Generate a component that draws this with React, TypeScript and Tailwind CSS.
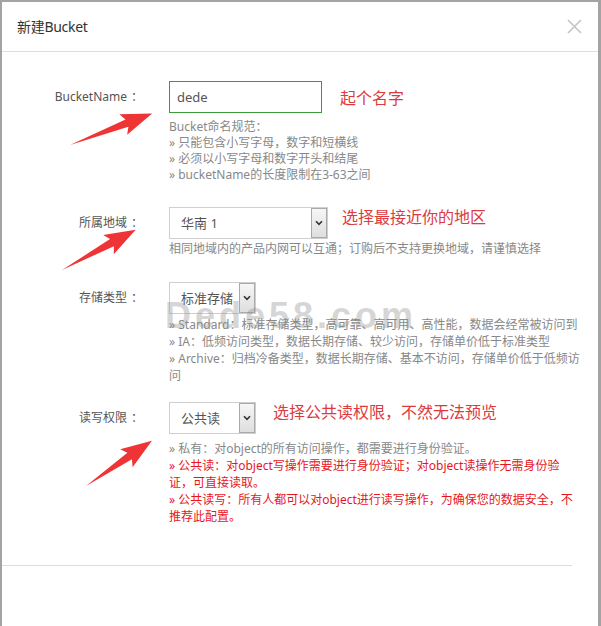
const Chevron = () => (
  <svg width="8" height="6" viewBox="0 0 8 6" className="block">
    <path d="M1 1.2 L4 4.4 L7 1.2" fill="none" stroke="#333" strokeWidth="1.6" />
  </svg>
)

const Select = ({ value, width }: { value: string; width: string }) => (
  <div className={`${width} h-[32px] flex border border-[#cfcfcf] bg-white`}>
    <div className="flex-1 pl-[11px] leading-[30px] text-[13px] text-[#555]">{value}</div>
    <div className="w-[16px] flex items-center justify-center border border-[#a9a9a9] bg-gradient-to-b from-[#f6f6f6] to-[#dedede]">
      <Chevron />
    </div>
  </div>
)

const Label = ({ text }: { text: string }) => (
  <div className="w-[137px] shrink-0 text-right leading-[32px] text-[#555] whitespace-nowrap">
    {text}
    <span className="inline-block w-[8px] ml-[4px] text-left">：</span>
  </div>
)

// arrow drawn pointing right from the tail, then rotated into place
const Arrow = ({ x, y, len, angle }: { x: number; y: number; len: number; angle: number }) => (
  <polygon
    transform={`translate(${x} ${y}) rotate(${angle})`}
    points={`0,0 ${len - 27},-4 ${len - 31},-11 ${len},0 ${len - 31},11 ${len - 27},4`}
    fill="#ee3434"
  />
)

export default function App() {
  const rules = ['Bucket命名规范：', '» 只能包含小写字母，数字和短横线', '» 必须以小写字母和数字开头和结尾', '» bucketName的长度限制在3-63之间']
  const storage = [
    '» Standard：标准存储类型，高可靠、高可用、高性能，数据会经常被访问到',
    '» IA：低频访问类型，数据长期存储、较少访问，存储单价低于标准类型',
    '» Archive：归档冷备类型，数据长期存储、基本不访问，存储单价低于低频访',
    '问'
  ]

  return (
    <div className="relative w-[601px] h-[626px] bg-white border-t-2 border-l-2 border-r-[3px] border-[#a3a3a3] font-['Noto_Sans','Noto_Sans_CJK_SC',sans-serif] overflow-hidden">
      {/* Header */}
      <div className="h-[50px] flex items-center justify-between pl-[15px] pr-[16px] border-b border-[#dedede]">
        <span className="text-[14px] text-[#333] tracking-[-0.3px]">新建Bucket</span>
        <svg width="15" height="15" viewBox="0 0 15 15">
          <path d="M1 1 L14 14 M14 1 L1 14" stroke="#c4c4c4" strokeWidth="1.6" />
        </svg>
      </div>

      {/* Body */}
      <div className="pt-[29px] text-[12px]">
        <div className="flex">
          <Label text="BucketName" />
          <div className="ml-[30px]">
            <div className="flex items-start">
              <div className="w-[153px] h-[32px] border border-[#3b9a3b] pl-[7px] leading-[30px] text-[13px] text-[#555]">dede</div>
              <span className="ml-[18px] mt-[1px] leading-[32px] text-[16px] text-[#dc3a40]">起个名字</span>
            </div>
            <div className="mt-[5px] leading-[16px] text-[#888]">
              {rules.map((r, i) => (
                <div key={i} className="whitespace-nowrap">{r}</div>
              ))}
            </div>
          </div>
        </div>

        <div className="flex mt-[24px]">
          <Label text="所属地域" />
          <div className="ml-[30px]">
            <div className="flex items-start">
              <Select value="华南 1" width="w-[159px]" />
              <span className="ml-[14px] -mt-[6px] leading-[32px] text-[16px] text-[#dc3a40]">选择最接近你的地区</span>
            </div>
            <div className="mt-[2px] leading-[16px] text-[#888] whitespace-nowrap">
              相同地域内的产品内网可以互通；订购后不支持更换地域，请谨慎选择
            </div>
          </div>
        </div>

        <div className="flex mt-[25px]">
          <Label text="存储类型" />
          <div className="ml-[30px]">
            <Select value="标准存储" width="w-[87px]" />
            <div className="mt-[2px] leading-[17px] text-[#888]">
              {storage.map((s, i) => (
                <div key={i} className="whitespace-nowrap">{s}</div>
              ))}
            </div>
          </div>
        </div>

        <div className="flex mt-[18px]">
          <Label text="读写权限" />
          <div className="ml-[30px]">
            <div className="flex items-start">
              <Select value="公共读" width="w-[87px]" />
              <span className="ml-[17px] -mt-[6px] leading-[32px] text-[16px] text-[#dc3a40]">选择公共读权限，不然无法预览</span>
            </div>
            <div className="mt-[6px] leading-[17px] whitespace-nowrap">
              <div className="text-[#888]">» 私有：对object的所有访问操作，都需要进行身份验证。</div>
              <div className="text-[#e8161c]">» 公共读：对object写操作需要进行身份验证；对object读操作无需身份验</div>
              <div className="text-[#e8161c]">证，可直接读取。</div>
              <div className="text-[#e8161c]">» 公共读写：所有人都可以对object进行读写操作，为确保您的数据安全，不</div>
              <div className="text-[#e8161c]">推荐此配置。</div>
            </div>
          </div>
        </div>

        <div className="mt-[40px] mr-[26px] border-t border-[#dcdcdc]" />
      </div>

      {/* watermark */}
      <div className="absolute left-[163px] top-[287px] text-[36px] font-bold tracking-[4px] text-[#8c8c8c] opacity-35 pointer-events-none font-['Liberation_Sans',sans-serif]">
        Dede58.com
      </div>

      {/* annotation arrows */}
      <svg className="absolute left-0 top-0 pointer-events-none" width="601" height="626">
        <Arrow x={68} y={143} len={88} angle={-21} />
        <Arrow x={60} y={268} len={84} angle={-28.7} />
        <Arrow x={84} y={484} len={80} angle={-34.5} />
      </svg>
    </div>
  )
}
